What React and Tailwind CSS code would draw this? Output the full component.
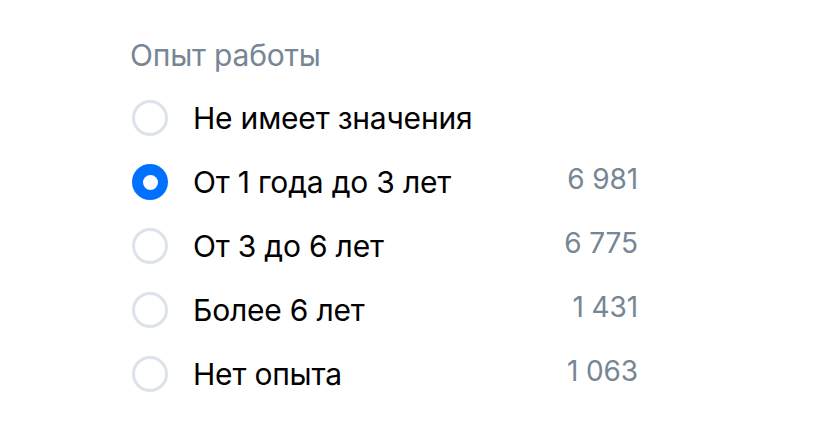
export default function App() {
  const rows = [
    { label: "Не имеет значения", count: "", checked: false },
    { label: "От 1 года до 3 лет", count: "6 981", checked: true },
    { label: "От 3 до 6 лет", count: "6 775", checked: false },
    { label: "Более 6 лет", count: "1 431", checked: false },
    { label: "Нет опыта", count: "1 063", checked: false },
  ];
  return (
    <div className="w-[820px] h-[439px] bg-white font-['Inter',sans-serif] pl-[130px] pt-[39px]">
      <div className="text-[30px] leading-[32px] text-[#768694] tracking-[-0.2px]">Опыт работы</div>
      <div className="mt-[15px] w-[508px] flex flex-col">
        {rows.map((r) => (
          <div key={r.label} className="h-[64px] flex items-center">
            {r.checked ? (
              <div className="w-[36px] h-[36px] rounded-full bg-[#0070ff] flex items-center justify-center ml-[2px] shrink-0">
                <div className="w-[15px] h-[15px] rounded-full bg-white" />
              </div>
            ) : (
              <div className="w-[36px] h-[36px] rounded-full border-[3px] border-[#dce3eb] ml-[2px] shrink-0" />
            )}
            <div className="ml-[25px] flex-1 text-[30px] leading-[32px] text-black tracking-[-0.2px]">{r.label}</div>
            <div className="text-[28px] leading-[32px] text-[#768694] -mt-[6px] tracking-[-0.1px]">{r.count}</div>
          </div>
        ))}
      </div>
    </div>
  );
}
